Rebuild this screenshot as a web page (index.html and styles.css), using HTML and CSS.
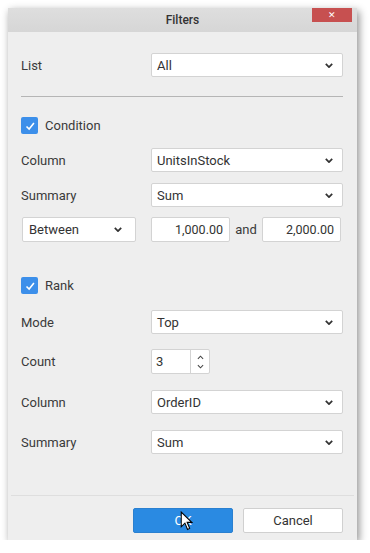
FILE: index.html
```html
<!DOCTYPE html>
<html lang="en">
<head>
    <meta charset="UTF-8">
    <title>Filters</title>
    <link rel="stylesheet" href="styles.css">
</head>
<body>

<div class="dialog">
    <div class="title-bar">
        <span class="title">Filters</span>
        <div class="close-btn">&#x2715;</div>
    </div>

    <div class="dialog-body">
        <div class="row row-list">
            <span class="label">List</span>
            <div class="select wide"><span>All</span><svg class="chevron" viewBox="0 0 10 6"><path d="M1 1 L5 5 L9 1"/></svg></div>
        </div>

        <div class="divider"></div>

        <div class="check-row first-check">
            <span class="checkbox"><svg viewBox="0 0 16 16"><path d="M4 8.5 L7 11.5 L12.5 4.5"/></svg></span>
            <span class="check-label">Condition</span>
        </div>

        <div class="row row-gap-1">
            <span class="label">Column</span>
            <div class="select wide"><span>UnitsInStock</span><svg class="chevron" viewBox="0 0 10 6"><path d="M1 1 L5 5 L9 1"/></svg></div>
        </div>
        <div class="row row-gap-2">
            <span class="label">Summary</span>
            <div class="select wide"><span>Sum</span><svg class="chevron" viewBox="0 0 10 6"><path d="M1 1 L5 5 L9 1"/></svg></div>
        </div>
        <div class="row row-gap-3 range-row">
            <div class="select between"><span>Between</span><svg class="chevron" viewBox="0 0 10 6"><path d="M1 1 L5 5 L9 1"/></svg></div>
            <div class="num-input from">1,000.00</div>
            <span class="and">and</span>
            <div class="num-input">2,000.00</div>
        </div>

        <div class="check-row second-check">
            <span class="checkbox"><svg viewBox="0 0 16 16"><path d="M4 8.5 L7 11.5 L12.5 4.5"/></svg></span>
            <span class="check-label">Rank</span>
        </div>

        <div class="row row-gap-4">
            <span class="label">Mode</span>
            <div class="select wide"><span>Top</span><svg class="chevron" viewBox="0 0 10 6"><path d="M1 1 L5 5 L9 1"/></svg></div>
        </div>
        <div class="row row-gap-5 count-row">
            <span class="label">Count</span>
            <div class="spinner">
                <span class="spin-value">3</span>
                <span class="spin-arrows">
                    <svg viewBox="0 0 8 5"><path d="M1 4 L4 1 L7 4"/></svg>
                    <svg viewBox="0 0 8 5"><path d="M1 1 L4 4 L7 1"/></svg>
                </span>
            </div>
        </div>
        <div class="row row-gap-6">
            <span class="label">Column</span>
            <div class="select wide"><span>OrderID</span><svg class="chevron" viewBox="0 0 10 6"><path d="M1 1 L5 5 L9 1"/></svg></div>
        </div>
        <div class="row row-gap-7">
            <span class="label">Summary</span>
            <div class="select wide"><span>Sum</span><svg class="chevron" viewBox="0 0 10 6"><path d="M1 1 L5 5 L9 1"/></svg></div>
        </div>
    </div>

    <div class="footer">
        <div class="btn btn-ok">OK
            <svg class="cursor" viewBox="0 0 12 19"><path d="M1 1 L1 15 L4.5 11.5 L7 17.5 L9 16.5 L6.6 10.8 L11 10.8 Z"/></svg>
        </div>
        <div class="btn btn-cancel">Cancel</div>
    </div>
</div>

</body>
</html>
```

FILE: styles.css
```css
body {
    margin: 0;
    background-color: #ffffff;
    font-family: 'Roboto', 'Liberation Sans', sans-serif;
    color: #333333;
}

.dialog {
    margin: 8px 0 0 8px;
    width: 349px;
    height: 532px;
    background-color: #eeeeee;
    box-shadow: 2px 3px 8px rgba(0, 0, 0, 0.45);
    display: flex;
    flex-direction: column;
}

.title-bar {
    position: relative;
    height: 24px;
    flex-shrink: 0;
    background: linear-gradient(#dedede, #d6d6d6);
    display: flex;
    justify-content: center;
    align-items: center;
}

.title {
    font-size: 12px;
    font-weight: 500;
    color: #333333;
}

.close-btn {
    position: absolute;
    top: 0;
    right: 5px;
    width: 40px;
    height: 14px;
    background-color: #c75050;
    color: #ffffff;
    font-size: 9px;
    line-height: 14px;
    text-align: center;
}

.dialog-body {
    padding: 0 14px 0 13px;
    flex: 1;
}

.row {
    display: flex;
    align-items: center;
    height: 24px;
}

.label {
    width: 130px;
    font-size: 13px;
    color: #3a3a3a;
}

.select {
    box-sizing: border-box;
    height: 24px;
    background-color: #ffffff;
    border: 1px solid #d3d3d3;
    border-radius: 2px;
    display: flex;
    align-items: center;
    justify-content: space-between;
    padding: 0 9px 0 5px;
    font-size: 13px;
    color: #333333;
}

.wide {
    width: 192px;
}

.chevron {
    width: 8px;
    height: 5px;
    fill: none;
    stroke: #333333;
    stroke-width: 2.2;
}

.row-list { margin-top: 21px; }

.divider {
    height: 1px;
    background-color: #b5b5b5;
    margin-top: 19px;
}

.check-row {
    display: flex;
    align-items: center;
    height: 17px;
}

.first-check { margin-top: 20px; }
.second-check { margin-top: 35px; }

.checkbox {
    box-sizing: border-box;
    width: 17px;
    height: 17px;
    border-radius: 2px;
    background-color: #3c8fea;
    display: flex;
    align-items: center;
    justify-content: center;
}

.checkbox svg {
    width: 14px;
    height: 14px;
    fill: none;
    stroke: #ffffff;
    stroke-width: 1.8;
}

.check-label {
    margin-left: 7px;
    font-size: 13px;
    color: #3a3a3a;
}

.row-gap-1 { margin-top: 14px; }
.row-gap-2 { margin-top: 11px; }
.row-gap-3 { margin-top: 10px; height: 25px; }
.row-gap-4 { margin-top: 16px; }
.row-gap-5 { margin-top: 15px; height: 25px; }
.row-gap-6 { margin-top: 16px; }
.row-gap-7 { margin-top: 16px; }

.range-row .between {
    width: 114px;
    height: 25px;
    margin-left: 1px;
    padding-left: 6px;
    padding-right: 13px;
}

.num-input {
    box-sizing: border-box;
    width: 79px;
    height: 25px;
    background-color: #ffffff;
    border: 1px solid #d3d3d3;
    border-radius: 2px;
    font-size: 12.5px;
    text-align: right;
    padding-right: 6px;
    line-height: 23px;
    color: #333333;
}

.num-input.from {
    margin-left: 15px;
}

.and {
    width: 32px;
    text-align: center;
    font-size: 13px;
    color: #3a3a3a;
}

.spinner {
    box-sizing: border-box;
    width: 59px;
    height: 25px;
    background-color: #ffffff;
    border: 1px solid #d3d3d3;
    border-radius: 2px;
    display: flex;
}

.spin-value {
    width: 39px;
    border-right: 1px solid #d3d3d3;
    font-size: 13px;
    line-height: 23px;
    padding-left: 4px;
    box-sizing: border-box;
}

.spin-arrows {
    flex: 1;
    display: flex;
    flex-direction: column;
    align-items: center;
    justify-content: center;
    gap: 4px;
}

.spin-arrows svg {
    width: 7px;
    height: 5px;
    fill: none;
    stroke: #444444;
    stroke-width: 1.2;
}

.footer {
    box-sizing: border-box;
    flex-shrink: 0;
    height: 45px;
    margin: 0 3px;
    border-top: 1px solid #dedede;
    display: flex;
    justify-content: flex-end;
    align-items: flex-start;
    padding: 12px 11px 0 0;
    gap: 10px;
}

.btn {
    box-sizing: border-box;
    width: 100px;
    height: 25px;
    border-radius: 2px;
    font-size: 13px;
    display: flex;
    align-items: center;
    justify-content: center;
}

.btn-ok {
    position: relative;
    background-color: #2a8ae2;
    color: #ffffff;
    border: 1px solid #2a80d0;
}

.btn-cancel {
    background-color: #ffffff;
    border: 1px solid #d0d0d0;
    color: #333333;
}

.cursor {
    position: absolute;
    left: 46px;
    top: 2px;
    width: 13px;
    height: 20px;
    fill: #ffffff;
    stroke: #000000;
    stroke-width: 1;
}
```
